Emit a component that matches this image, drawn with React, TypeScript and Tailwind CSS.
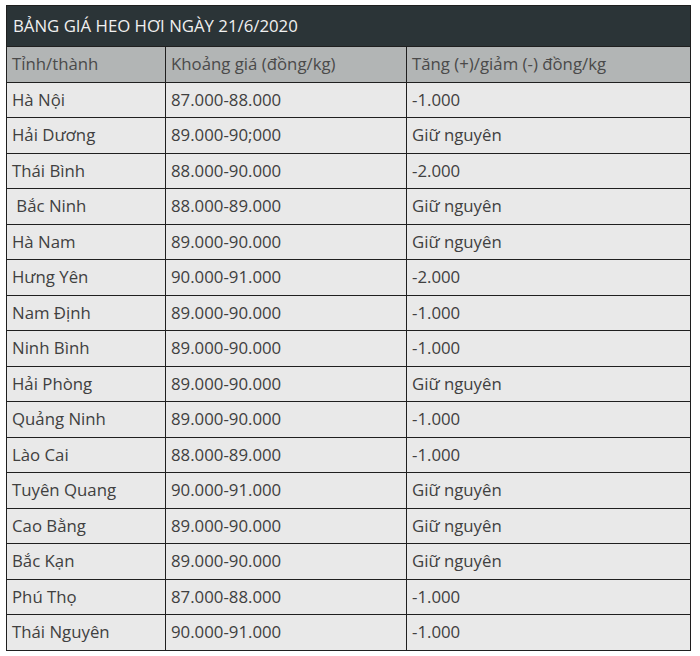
const rows: [string, string, string][] = [
  ["Hà Nội", "87.000-88.000", "-1.000"],
  ["Hải Dương", "89.000-90;000", "Giữ nguyên"],
  ["Thái Bình", "88.000-90.000", "-2.000"],
  ["\u00a0Bắc Ninh", "88.000-89.000", "Giữ nguyên"],
  ["Hà Nam", "89.000-90.000", "Giữ nguyên"],
  ["Hưng Yên", "90.000-91.000", "-2.000"],
  ["Nam Định", "89.000-90.000", "-1.000"],
  ["Ninh Bình", "89.000-90.000", "-1.000"],
  ["Hải Phòng", "89.000-90.000", "Giữ nguyên"],
  ["Quảng Ninh", "89.000-90.000", "-1.000"],
  ["Lào Cai", "88.000-89.000", "-1.000"],
  ["Tuyên Quang", "90.000-91.000", "Giữ nguyên"],
  ["Cao Bằng", "89.000-90.000", "Giữ nguyên"],
  ["Bắc Kạn", "89.000-90.000", "Giữ nguyên"],
  ["Phú Thọ", "87.000-88.000", "-1.000"],
  ["Thái Nguyên", "90.000-91.000", "-1.000"],
];

const cell = "border border-[#1f1f1f] pl-[5px] h-[35.5px] p-0 align-middle";

export default function App() {
  return (
    <div className="w-[700px] h-[656px] overflow-hidden bg-white pl-[6px] pt-[5px] font-['Open_Sans',sans-serif] text-[16.8px] leading-[1.3]">
      <table className="w-[684px] border-collapse table-fixed">
        <colgroup>
          <col className="w-[159px]" />
          <col className="w-[241px]" />
          <col className="w-[284px]" />
        </colgroup>
        <thead>
          <tr>
            <th
              colSpan={3}
              className="bg-[#2b3437] text-[#f0f0f0] font-normal text-left pl-[6px] h-[41px] border border-[#1f1f1f]"
            >
              BẢNG GIÁ HEO HƠI NGÀY 21/6/2020
            </th>
          </tr>
          <tr className="bg-[#b2b5b5] text-[#4a4a4a]">
            <th className={`${cell} font-normal text-left`}>Tỉnh/thành</th>
            <th className={`${cell} font-normal text-left`}>Khoảng giá (đồng/kg)</th>
            <th className={`${cell} font-normal text-left`}>Tăng (+)/giảm (-) đồng/kg</th>
          </tr>
        </thead>
        <tbody className="bg-[#e9e9e9] text-[#404040]">
          {rows.map((r, i) => (
            <tr key={i}>
              <td className={cell}>{r[0]}</td>
              <td className={cell}>{r[1]}</td>
              <td className={cell}>{r[2]}</td>
            </tr>
          ))}
        </tbody>
      </table>
    </div>
  );
}
